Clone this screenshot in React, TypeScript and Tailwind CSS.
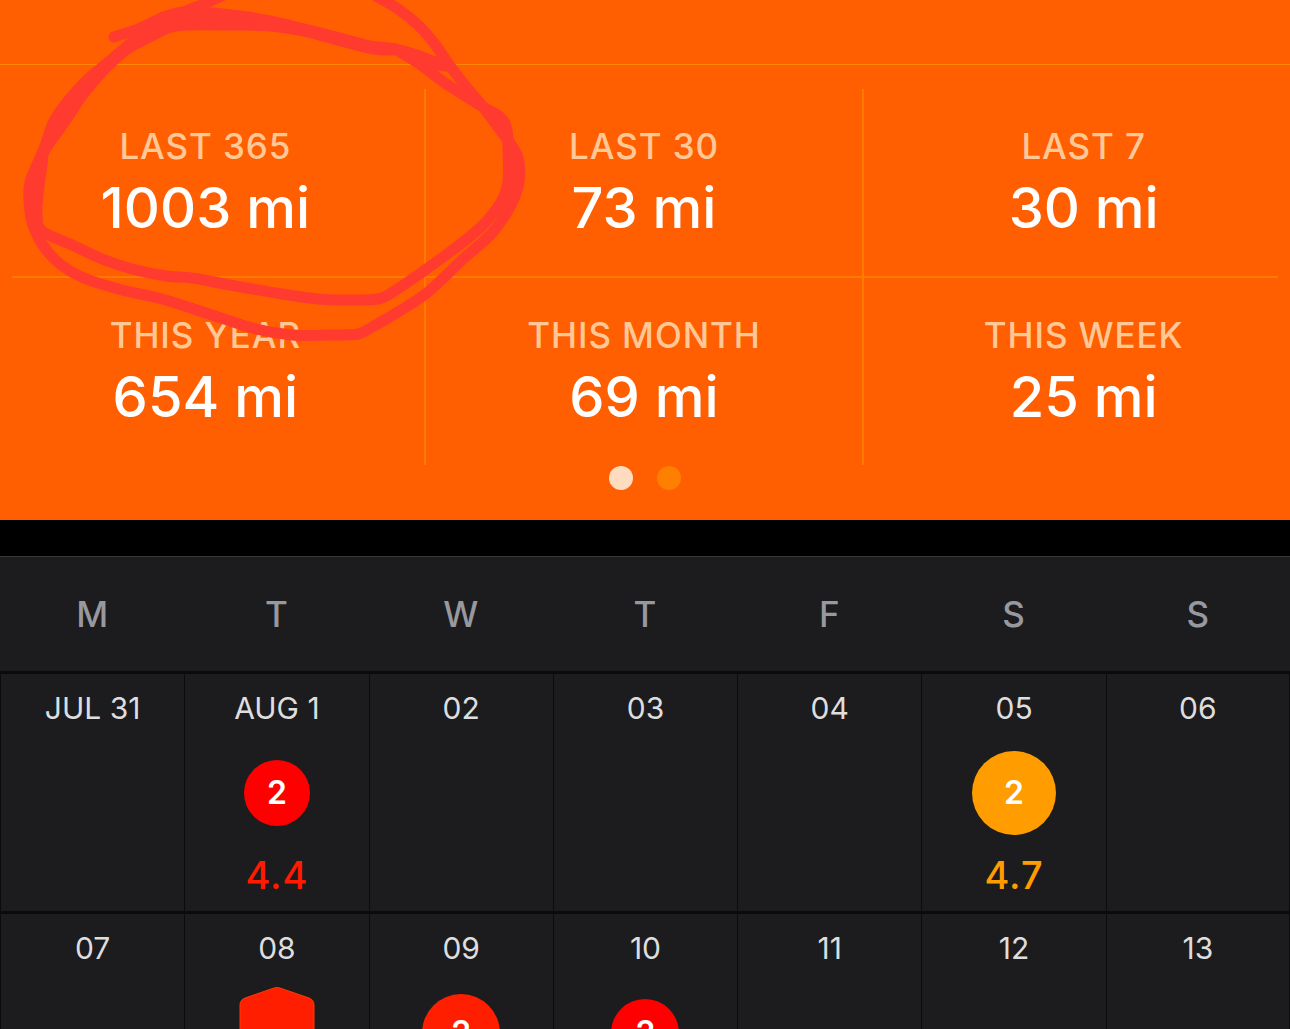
type Stat = { label: string; value: string };
type Shape = "small" | "medium" | "base" | "large" | "hexagon";
type Day = { date: string; shape?: Shape; count?: string; miles?: string; tone?: string };

const topStats: Stat[] = [
  { label: "LAST 365", value: "1003 mi" },
  { label: "LAST 30", value: "73 mi" },
  { label: "LAST 7", value: "30 mi" },
];

const bottomStats: Stat[] = [
  { label: "THIS YEAR", value: "654 mi" },
  { label: "THIS MONTH", value: "69 mi" },
  { label: "THIS WEEK", value: "25 mi" },
];

const weekdays = ["M", "T", "W", "T", "F", "S", "S"];

const weeks: Day[][] = [
  [
    { date: "JUL 31" },
    { date: "AUG 1", shape: "small", count: "2", miles: "4.4", tone: "text-[#ff1a00]" },
    { date: "02" },
    { date: "03" },
    { date: "04" },
    { date: "05", shape: "large", count: "2", miles: "4.7", tone: "text-[#ff9c00]" },
    { date: "06" },
  ],
  [
    { date: "07" },
    { date: "08", shape: "hexagon" },
    { date: "09", shape: "medium", count: "2" },
    { date: "10", shape: "base", count: "2" },
    { date: "11" },
    { date: "12" },
    { date: "13" },
  ],
];

const circleStyles: Record<string, string> = {
  small: "size-[66px] bg-[#ff0000]",
  base: "size-[68px] bg-[#ff0000]",
  medium: "size-[78px] bg-[#ff1e00]",
  large: "size-[84px] bg-[#ff9c00]",
};

type Point = [number, number];

const strokes: Point[][] = [
  [
    [114, 37], [138, 29], [164, 17], [184, 12], [212, 13], [240, 16], [270, 21], [300, 28],
    [340, 38], [370, 46], [395, 49], [422, 57], [445, 66],
  ],
  [
    [395, 49], [418, 63], [445, 83], [478, 104], [500, 117], [507, 130], [508, 152], [508, 182],
    [501, 202], [481, 227], [450, 252], [418, 275], [396, 290], [378, 299], [345, 300],
    [318, 299], [282, 294], [230, 285], [192, 278], [166, 276], [132, 269], [102, 259],
    [72, 245], [42, 231], [37, 215], [38, 195], [42, 165], [45, 150], [66, 120], [82, 96],
    [104, 70], [126, 50], [150, 37], [168, 28], [186, 25], [230, 25], [270, 26], [304, 31],
    [345, 42], [374, 49], [395, 50],
  ],
  [
    [376, -4], [398, 9], [418, 25], [434, 43], [450, 66], [468, 89], [484, 108], [500, 130],
    [514, 149], [519, 162], [519, 182], [511, 205], [492, 233], [462, 260], [428, 292],
    [398, 312], [374, 326], [358, 334], [330, 335], [292, 335], [256, 329], [212, 315],
    [162, 299], [122, 290], [84, 278], [60, 264], [42, 244], [32, 222], [29, 200], [30, 182],
    [39, 160], [45, 146], [54, 121], [68, 101], [88, 79], [110, 61], [132, 42], [152, 28],
    [182, 13], [206, 3], [226, -6],
  ],
  [[58, 124], [74, 100], [96, 74], [118, 54]],
  [[128, 46], [158, 27], [190, 19], [240, 21], [290, 28]],
  [[404, 54], [425, 63], [445, 66]],
  [[513, 150], [513, 182]],
  [[34, 182], [33, 216]],
];

function smoothPath(points: Point[]) {
  let d = `M${points[0][0]} ${points[0][1]}`;
  for (let i = 0; i < points.length - 1; i++) {
    const a = points[Math.max(i - 1, 0)];
    const b = points[i];
    const c = points[i + 1];
    const e = points[Math.min(i + 2, points.length - 1)];
    d += `C${b[0] + (c[0] - a[0]) / 6} ${b[1] + (c[1] - a[1]) / 6} ${c[0] - (e[0] - b[0]) / 6} ${c[1] - (e[1] - b[1]) / 6} ${c[0]} ${c[1]}`;
  }
  return d;
}

function Marker() {
  return (
    <svg
      className="pointer-events-none absolute top-0 left-0"
      width="540"
      height="350"
      viewBox="0 0 540 350"
      fill="none"
      stroke="#ff3b30"
      strokeWidth="11"
      strokeLinecap="round"
      strokeLinejoin="round"
      aria-hidden="true"
    >
      {strokes.map((points, i) => (
        <path key={i} d={smoothPath(points)} />
      ))}
    </svg>
  );
}

function StatRow({ stats }: { stats: Stat[] }) {
  return (
    <dl className="grid grid-cols-3">
      {stats.map((s) => (
        <div
          key={s.label}
          className="flex flex-col items-center gap-2.5 border-r-2 border-[#ff7b00] pt-[37px] pb-9 last:border-r-0"
        >
          <dt className="text-[35px] leading-10 font-medium tracking-wide text-[#ffc896]">{s.label}</dt>
          <dd className="text-[56px] leading-16 font-medium text-white">{s.value}</dd>
        </div>
      ))}
    </dl>
  );
}

function Badge({ day }: { day: Day }) {
  if (!day.shape) return null;
  if (day.shape === "hexagon") {
    return (
      <svg width="76" height="92" viewBox="0 0 76 92" aria-hidden="true">
        <path
          d="M35 1Q38 0 41 1L70 11Q75 13 75 18V74Q75 79 70 81L41 91Q38 92 35 91L6 81Q1 79 1 74V18Q1 13 6 11Z"
          fill="#ff1e00"
          stroke="#ff3a00"
        />
      </svg>
    );
  }
  return (
    <span
      className={`flex items-center justify-center rounded-full text-[32px] leading-10 font-semibold text-white ${circleStyles[day.shape]}`}
    >
      {day.count}
    </span>
  );
}

export default function App() {
  return (
    <main className="h-screen overflow-hidden bg-black font-['Inter',sans-serif]">
      <section className="relative overflow-hidden bg-[#ff5f00] pb-[30px]" aria-label="Distance totals">
        <div className="h-16" />
        <div className="h-px bg-[#ff8a00]" />
        <div className="-mx-[13px] pt-6">
          <StatRow stats={topStats} />
          <div className="mx-[25px] h-0.5 bg-[#ff7b00]" />
          <StatRow stats={bottomStats} />
        </div>
        <div className="flex justify-center gap-6 pt-px">
          <button type="button" aria-label="Page 1" className="size-6 rounded-full bg-[#ffdcc0]" />
          <button type="button" aria-label="Page 2" className="size-6 rounded-full bg-[#ff7f00]" />
        </div>
        <Marker />
      </section>

      <section className="mt-9 border-t border-[#38383a] bg-[#1c1c1e]" aria-label="Calendar">
        <table className="w-full table-fixed border-separate border-spacing-0">
          <thead>
            <tr>
              {weekdays.map((d, i) => (
                <th key={i} scope="col" className="h-[114px] p-0 text-[35px] font-medium text-[#98989f]">
                  {d}
                </th>
              ))}
            </tr>
          </thead>
          <tbody>
            {weeks.map((week, w) => (
              <tr key={w}>
                {week.map((day) => (
                  <td
                    key={day.date}
                    className="h-60 border-t-3 border-l border-[#0b0b0d] p-0 align-top last:border-r"
                  >
                    <div className="flex flex-col items-center pt-4">
                      <span className="text-3xl leading-9 text-[#dededf]">{day.date}</span>
                      <div className="mt-[25px] flex h-[84px] items-center">
                        <Badge day={day} />
                      </div>
                      {day.miles && (
                        <span className={`mt-5 text-[38px] leading-10 font-medium tracking-wide ${day.tone}`}>
                          {day.miles}
                        </span>
                      )}
                    </div>
                  </td>
                ))}
              </tr>
            ))}
          </tbody>
        </table>
      </section>
    </main>
  );
}
